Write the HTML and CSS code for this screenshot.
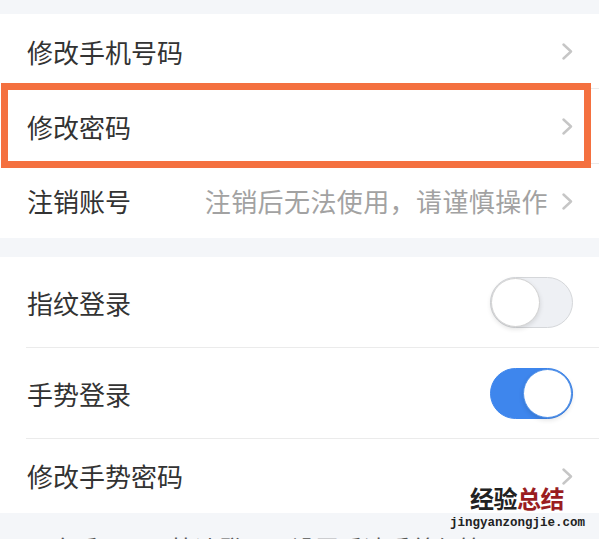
FILE: index.html
```html
<!DOCTYPE html>
<html lang="zh-CN">
<head>
<meta charset="utf-8">
<title>账号与安全</title>
<link rel="stylesheet" href="styles.css">
</head>
<body>
<div class="page">
  <div class="group">
    <div class="row row-short">
      <span class="label">修改手机号码</span>
      <span class="right"><svg class="chev" viewBox="0 0 11 17" width="11" height="17"><polyline points="1.5,1.5 9,8.5 1.5,15.5"/></svg></span>
    </div>
    <div class="row row-short row-highlight">
      <span class="label">修改密码</span>
      <span class="right"><svg class="chev" viewBox="0 0 11 17" width="11" height="17"><polyline points="1.5,1.5 9,8.5 1.5,15.5"/></svg></span>
    </div>
    <div class="row row-short row-last">
      <span class="label">注销账号</span>
      <span class="right"><span class="hint">注销后无法使用，请谨慎操作</span><svg class="chev" viewBox="0 0 11 17" width="11" height="17"><polyline points="1.5,1.5 9,8.5 1.5,15.5"/></svg></span>
    </div>
  </div>

  <div class="group group-gap">
    <div class="row row-tall">
      <span class="label">指纹登录</span>
      <span class="switch"><span class="knob"></span></span>
    </div>
    <div class="row row-tall">
      <span class="label">手势登录</span>
      <span class="switch switch-on"><span class="knob"></span></span>
    </div>
    <div class="row row-short row-last">
      <span class="label">修改手势密码</span>
      <span class="right"><svg class="chev" viewBox="0 0 11 17" width="11" height="17"><polyline points="1.5,1.5 9,8.5 1.5,15.5"/></svg></span>
    </div>
  </div>

  <p class="note">开启后可用于快速登录，设置后请妥善保管</p>
</div>

<div class="watermark">
  <div class="wm-title"><span class="wm-dark">经验</span><span class="wm-red">总结</span></div>
  <div class="wm-url">jingyanzongjie.com</div>
</div>
</body>
</html>
```
FILE: styles.css
```css
* {
  box-sizing: border-box;
}

html, body {
  margin: 0;
  padding: 0;
}

body {
  background: #f4f6f9;
  font-family: "Noto Sans CJK SC", "Noto Sans", sans-serif;
  color: #333333;
  width: 599px;
  height: 539px;
  overflow: hidden;
  position: relative;
}

.page {
  padding-top: 14px;
}

.group {
  background: #ffffff;
}

.group-gap {
  margin-top: 19px;
}

.row {
  position: relative;
  display: flex;
  align-items: center;
  justify-content: space-between;
  padding: 0 26px 0 27px;
}

.row::before {
  content: "";
  position: absolute;
  left: 26px;
  right: 0;
  bottom: 0;
  height: 1px;
  background: #ebebeb;
}

.row-last::before {
  display: none;
}

.row-short {
  height: 75px;
}

.row-tall {
  height: 91px;
}

.row-last {
  height: 74px;
}

.label {
  font-size: 26px;
  line-height: 30px;
  color: #333333;
}

.right {
  display: flex;
  align-items: center;
  gap: 14px;
}

.hint {
  font-size: 26px;
  line-height: 30px;
  color: #a2a2a2;
  letter-spacing: 0.4px;
}

.chev {
  display: block;
  fill: none;
  stroke: #c6c6c6;
  stroke-width: 2.4;
  stroke-linecap: round;
  stroke-linejoin: round;
}

.row-highlight::after {
  content: "";
  position: absolute;
  left: 1px;
  right: 8px;
  top: -6px;
  bottom: -4px;
  border: 7px solid #f4703f;
  pointer-events: none;
}

.switch {
  display: flex;
  justify-content: flex-start;
  align-items: center;
  width: 83px;
  height: 51px;
  border-radius: 26px;
  background: #eef0f4;
  border: 1.5px solid #d5d7da;
}

.switch .knob {
  width: 49px;
  height: 49px;
  border-radius: 50%;
  background: #ffffff;
  border: 1px solid #d2d2d2;
  box-shadow: 0 2px 5px rgba(0, 0, 0, 0.12);
}

.switch-on {
  justify-content: flex-end;
  background: #3e86ed;
  border-color: #3e86ed;
}

.switch-on .knob {
  border-color: #4d8fe8;
}

.note {
  margin: 0;
  padding: 18px 0 0 27px;
  font-size: 24px;
  line-height: 34px;
  color: #555555;
}

.watermark {
  position: absolute;
  right: 14px;
  top: 484px;
  display: flex;
  flex-direction: column;
  align-items: flex-end;
}

.wm-title {
  font-family: "Noto Sans CJK SC", sans-serif;
  font-weight: 700;
  font-size: 24px;
  line-height: 28px;
  padding-right: 21px;
  letter-spacing: -0.5px;
}

.wm-dark {
  color: #222222;
}

.wm-red {
  color: #9a1d1f;
}

.wm-url {
  font-family: "Liberation Mono", "DejaVu Sans Mono", monospace;
  font-weight: 700;
  font-size: 12.5px;
  line-height: 16px;
  color: #222222;
  margin-top: 3px;
}
```
